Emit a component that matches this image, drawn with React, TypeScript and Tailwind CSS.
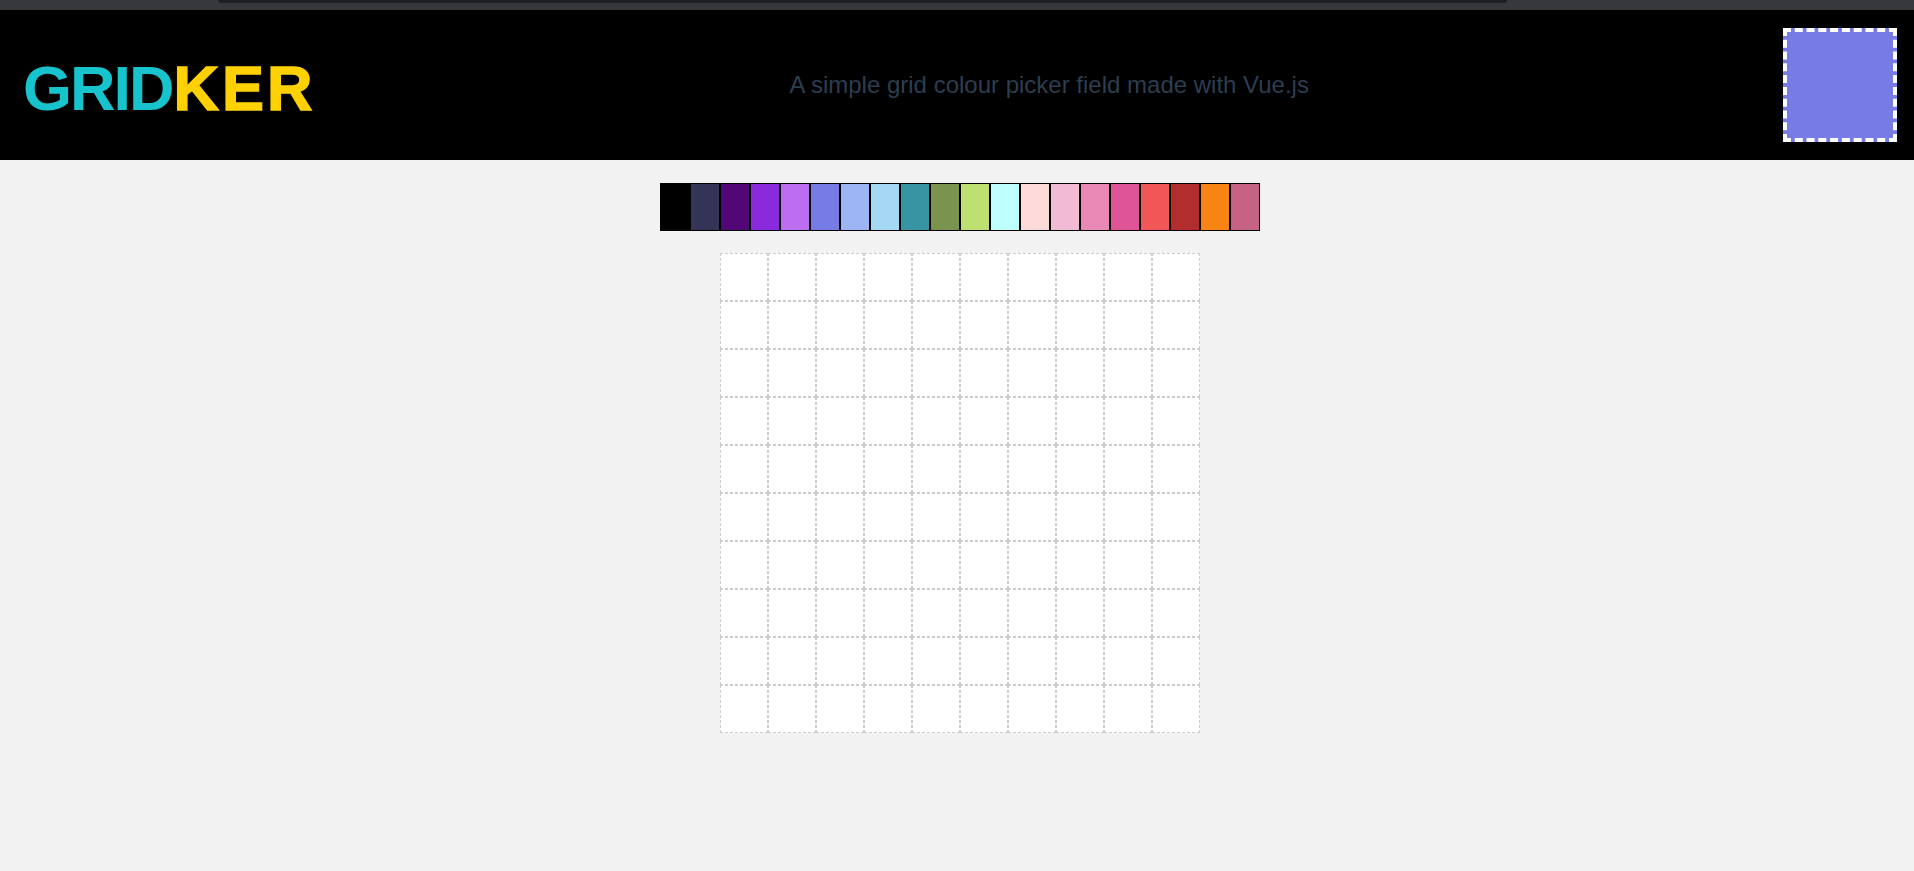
const palette = [
  "#000000",
  "#343556",
  "#520776",
  "#8a2adc",
  "#bd6ef0",
  "#777be6",
  "#9bb5f5",
  "#a5d8f3",
  "#3794a3",
  "#7a9450",
  "#bde071",
  "#bdfffc",
  "#fedbdb",
  "#f3bad6",
  "#ea88b5",
  "#df5496",
  "#f15757",
  "#b12d2e",
  "#f78413",
  "#c66384",
];

const GRID_SIZE = 10;

const App = () => {
  const cells = Array.from({ length: GRID_SIZE * GRID_SIZE }, (_, i) => i);

  return (
    <div className="min-h-screen bg-[#f2f2f2] font-['Liberation_Sans',Arial,sans-serif]">
      {/* browser chrome strip */}
      <div className="h-[10px] bg-[#37383c] pl-[218px]">
        <div className="h-[3px] w-[1289px] rounded-b-md bg-[#202124]"></div>
      </div>

      <header className="h-[150px] bg-black flex items-center justify-between pl-[23px] pr-[17px]">
        <h1 className="mt-[6px] text-[63px] font-bold leading-normal">
          <span className="text-[#17c3cc] tracking-[-2px]">GRID</span>
          <span className="ml-[1px] text-[#ffd100] tracking-[3px] [-webkit-text-stroke:1.5px_#ffd100]">
            KER
          </span>
        </h1>
        <p className="text-[24px] text-[#2c3e50]">
          A simple grid colour picker field made with Vue.js
        </p>
        <div className="w-[114px] h-[114px] border-4 border-dashed border-white bg-[#777be6]"></div>
      </header>

      <main className="flex flex-col items-center pt-[23px] pl-[6px]">
        <div className="flex">
          {palette.map((color) => (
            <div
              key={color}
              className="w-[30px] h-[48px] border border-black cursor-pointer"
              style={{ backgroundColor: color }}
            ></div>
          ))}
        </div>

        <div className="mt-[22px] grid grid-cols-10 w-[480px]">
          {cells.map((cell) => (
            <div
              key={cell}
              className="w-[48px] h-[48px] bg-white border border-dashed border-[#cccccc]"
            ></div>
          ))}
        </div>
      </main>
    </div>
  );
};

export default App;
